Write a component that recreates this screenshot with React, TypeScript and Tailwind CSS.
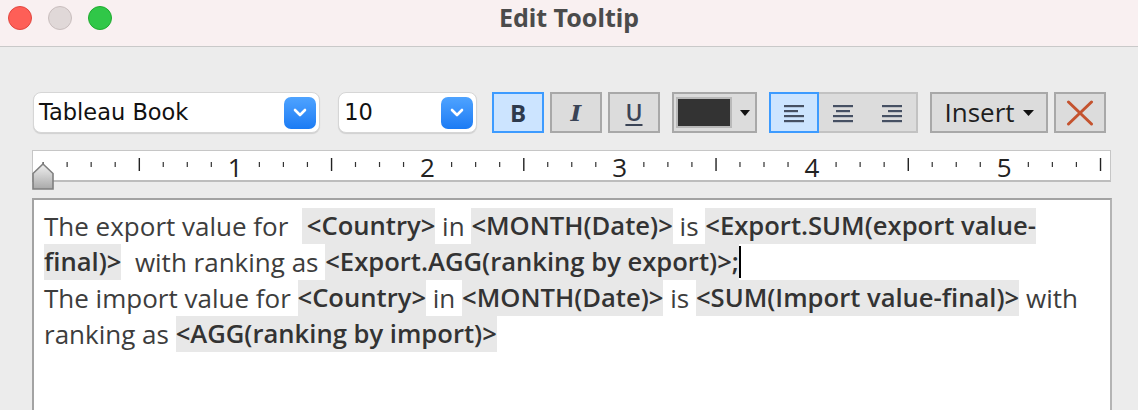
import React from "react";

const OPEN = "font-['Open_Sans','Noto_Sans',sans-serif]";

function Chevron() {
  return (
    <div className="w-[32px] h-[32px] rounded-[7px] bg-gradient-to-b from-[#4ea3ff] to-[#1a7bf4] flex items-center justify-center">
      <svg width="14" height="9" viewBox="0 0 14 9">
        <path d="M2 2 L7 7 L12 2" fill="none" stroke="white" strokeWidth="2.6" strokeLinecap="round" strokeLinejoin="round" />
      </svg>
    </div>
  );
}

function Dropdown({ label, width }: { label: string; width: string }) {
  return (
    <div className={`${width} h-[41px] bg-white rounded-[8px] border border-[#d6d6d6] shadow-[0_1px_1px_rgba(0,0,0,0.12)] flex items-center justify-between pl-[5px] pr-[3px]`}>
      <span className="font-['DejaVu_Sans',sans-serif] text-[22.5px] text-[#111] leading-none">{label}</span>
      <Chevron />
    </div>
  );
}

function ToolBtn({ active, children, width = "w-[52px]" }: { active?: boolean; children: React.ReactNode; width?: string }) {
  return (
    <div
      className={`${width} h-[41px] border-2 flex items-center justify-center ${
        active ? "border-[#3d9bff] bg-[#cce4ff]" : "border-[#a8a8a8] bg-[#dcdcdc]"
      }`}
    >
      {children}
    </div>
  );
}

function AlignIcon({ align }: { align: "left" | "center" | "right" }) {
  const widths = [20, 14, 20, 20];
  return (
    <svg width="22" height="20" viewBox="0 0 22 20">
      {widths.map((w, i) => {
        const x = align === "left" ? 1 : align === "right" ? 21 - w : 11 - w / 2;
        return <rect key={i} x={x} y={2 + i * 5} width={w} height="2.2" fill="#465063" />;
      })}
    </svg>
  );
}

function Ruler() {
  const ticks = [];
  const eighth = 24.03;
  const start = 10;
  for (let i = 0; i <= 44; i++) {
    const x = start + i * eighth;
    if (i % 8 === 0 && i > 0) {
      ticks.push(
        <text key={i} x={x} y={26} textAnchor="middle" fontSize="26" fill="#222" fontFamily="'Open Sans', sans-serif">
          {i / 8}
        </text>
      );
    } else if (i % 4 === 0 && i > 0) {
      ticks.push(<rect key={i} x={x - 0.5} y={7} width="1.4" height="13" fill="#222" />);
    } else {
      ticks.push(<rect key={i} x={x - 0.5} y={11} width="1.2" height="5" fill="#333" />);
    }
  }
  return (
    <div className="relative h-[32px] bg-white border border-[#c6c6c6] border-b-2 border-b-[#bdbdbd]">
      <svg width="1077" height="29" className="block overflow-visible">
        {ticks}
      </svg>
      <svg width="22" height="27" className="absolute left-[-1px] top-[12px]" viewBox="0 0 22 27">
        <defs>
          <linearGradient id="tab" x1="0" y1="0" x2="0" y2="1">
            <stop offset="0" stopColor="#f0f0f0" />
            <stop offset="1" stopColor="#a9a9a9" />
          </linearGradient>
        </defs>
        <path d="M11 1 L21 10.5 L21 26 L1 26 L1 10.5 Z" fill="url(#tab)" stroke="#7f7f7f" strokeWidth="1.6" />
      </svg>
    </div>
  );
}

function F({ children, extra = "" }: { children: React.ReactNode; extra?: string }) {
  return <span className={`inline-block bg-[#e8e8e8] font-semibold text-[25.6px] text-[#333] ${extra}`}>{children}</span>;
}
function T({ children }: { children: React.ReactNode }) {
  return <span className="inline-block">{children}</span>;
}

export default function App() {
  return (
    <div className={`w-[1138px] h-[410px] overflow-hidden bg-[#ececec] ${OPEN}`}>
      {/* Title bar */}
      <div className="h-[47px] bg-[#f9f0f1] border-b border-[#c9c9c9] grid grid-cols-[1fr_auto_1fr] items-start pt-[6px]">
        <div className="flex gap-[16px] pl-[8px]">
          <div className="w-[24px] h-[24px] rounded-full bg-[#fe5f57] border border-[#e2463f]" />
          <div className="w-[24px] h-[24px] rounded-full bg-[#e0d8d8] border border-[#c9bebe]" />
          <div className="w-[24px] h-[24px] rounded-full bg-[#30c748] border border-[#1fab2f]" />
        </div>
        <div className="h-[24px] flex items-center text-[25px] font-bold text-[#4b4b4b] font-['Noto_Sans',sans-serif]">
          Edit Tooltip
        </div>
        <div />
      </div>

      <div className="px-[32px] pt-[45px]">
        {/* Toolbar */}
        <div className="flex items-center pl-[1px]">
          <Dropdown label="Tableau Book" width="w-[290px]" />
          <div className="w-[18px]" />
          <Dropdown label="10" width="w-[140px]" />
          <div className="w-[15px]" />
          <div className="flex gap-[6px]">
            <ToolBtn active>
              <span className="font-['Open_Sans',sans-serif] font-bold text-[24px] text-[#2e3a4d] leading-none">B</span>
            </ToolBtn>
            <ToolBtn>
              <span className="font-['DejaVu_Serif',serif] italic font-bold text-[23px] text-[#3a4456] leading-none">I</span>
            </ToolBtn>
            <ToolBtn>
              <span className="font-['Open_Sans',sans-serif] font-semibold text-[23px] text-[#3a4456] leading-none underline decoration-2 underline-offset-[3px]">U</span>
            </ToolBtn>
          </div>
          <div className="w-[12px]" />
          <ToolBtn width="w-[86px]">
            <div className="flex items-center gap-[8px] mr-[2px]">
              <div className="w-[56px] h-[31px] bg-[#333333] border-2 border-[#b9b9b9]" />
              <svg width="10" height="6" viewBox="0 0 10 6">
                <path d="M0 0 L10 0 L5 6 Z" fill="#111" />
              </svg>
            </div>
          </ToolBtn>
          <div className="w-[12px]" />
          <div className="w-[150px] h-[41px] flex border-2 border-[#c2c2c2] bg-[#dcdcdc]">
            <div className="w-[50px] -m-[2px] mr-0 h-[41px] border-2 border-[#3d9bff] bg-[#cce4ff] flex items-center justify-center">
              <AlignIcon align="left" />
            </div>
            <div className="flex-1 flex items-center justify-center">
              <AlignIcon align="center" />
            </div>
            <div className="flex-1 flex items-center justify-center">
              <AlignIcon align="right" />
            </div>
          </div>
          <div className="w-[12px]" />
          <ToolBtn width="w-[120px]">
            <div className="flex items-center gap-[8px]">
              <span className="font-['Open_Sans',sans-serif] text-[26px] text-[#1e1e1e] leading-none -mt-[2px]">Insert</span>
              <svg width="11" height="6" viewBox="0 0 11 6">
                <path d="M0 0 L11 0 L5.5 6 Z" fill="#111" />
              </svg>
            </div>
          </ToolBtn>
          <div className="w-[6px]" />
          <ToolBtn>
            <svg width="30" height="26" viewBox="0 0 30 26">
              <path d="M3.5 2 L26.5 24" stroke="#c4532f" strokeWidth="3" strokeLinecap="round" />
              <path d="M26.5 2 L3.5 24" stroke="#c4532f" strokeWidth="3" strokeLinecap="round" />
            </svg>
          </ToolBtn>
        </div>

        {/* Ruler */}
        <div className="mt-[17px] w-[1079px]">
          <Ruler />
        </div>

        {/* Text area */}
        <div className="mt-[16px] w-[1080px] h-[260px] bg-white border-2 border-[#a3a3a3] border-r-[#b4b4b4] pl-[10px] pt-[8px] text-[26px] font-normal text-[#3d3d3d] whitespace-pre leading-[36px]">
          <div className="flex items-center h-[36px]">
            <T>The export value for  </T>
            <F extra="pl-[5px]">{"<Country>"}</F>
            <T> in </T>
            <F>{"<MONTH(Date)>"}</F>
            <T> is </T>
            <F>{"<Export.SUM(export value-"}</F>
          </div>
          <div className="flex items-center h-[36px]">
            <F>{"final)>"}</F>
            <T>  with ranking as </T>
            <F>{"<Export.AGG(ranking by export)>;"}</F>
            <span className="w-[2px] h-[32px] bg-black" />
          </div>
          <div className="flex items-center h-[36px]">
            <T>The import value for </T>
            <F>{"<Country>"}</F>
            <T> in </T>
            <F>{"<MONTH(Date)>"}</F>
            <T> is </T>
            <F>{"<SUM(Import value-final)>"}</F>
            <T> with</T>
          </div>
          <div className="flex items-center h-[36px]">
            <T>ranking as </T>
            <F>{"<AGG(ranking by import)>"}</F>
          </div>
        </div>
      </div>
    </div>
  );
}
